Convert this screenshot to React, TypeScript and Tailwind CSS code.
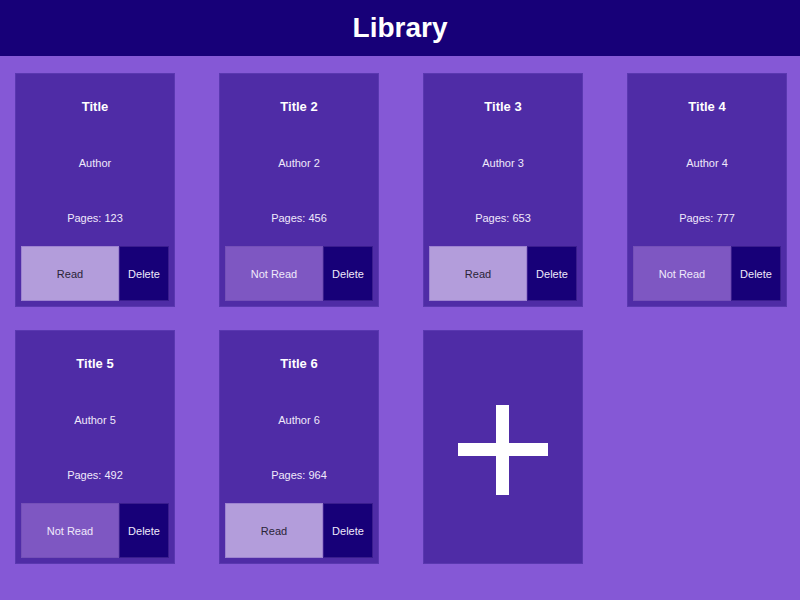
import React from "react";

type Book = { title: string; author: string; pages: number; read: boolean };

const books: Book[] = [
  { title: "Title", author: "Author", pages: 123, read: true },
  { title: "Title 2", author: "Author 2", pages: 456, read: false },
  { title: "Title 3", author: "Author 3", pages: 653, read: true },
  { title: "Title 4", author: "Author 4", pages: 777, read: false },
  { title: "Title 5", author: "Author 5", pages: 492, read: false },
  { title: "Title 6", author: "Author 6", pages: 964, read: true },
];

const BookCard = ({ book }: { book: Book }) => {
  return (
    <div className="h-[234px] bg-[#4f2ca6] border border-[#5a38b0] p-[5px] grid grid-rows-4 text-[#efe9fb] text-[11px]">
      <div className="flex items-center justify-center font-bold text-[13px] text-white">{book.title}</div>
      <div className="flex items-center justify-center pt-px">{book.author}</div>
      <div className="flex items-center justify-center pt-px">Pages: {book.pages}</div>
      <div className="flex">
        <button
          className={
            book.read
              ? "flex-1 pt-px bg-[#b39ddb] text-[#2a2438] border border-[#9d83d0]"
              : "flex-1 pt-px bg-[#7e57c2] text-[#efe9fb] border border-[#7450b8]"
          }
        >
          {book.read ? "Read" : "Not Read"}
        </button>
        <button className="w-[50px] pt-px bg-[#170078] text-[#efe9fb] border border-[#3a1d8e]">Delete</button>
      </div>
    </div>
  );
};

export default function App() {
  return (
    <div className="min-h-[600px] bg-[#8558d6] font-['Liberation_Sans',Arial,sans-serif]">
      <header className="h-[56px] bg-[#170078] flex items-center justify-center">
        <h1 className="text-white font-bold text-[28px]">Library</h1>
      </header>
      <main className="grid grid-cols-[repeat(4,160px)] gap-x-[44px] gap-y-[23px] pl-[15px] pt-[17px]">
        {books.map((b) => (
          <BookCard key={b.title} book={b} />
        ))}
        <div className="h-[234px] bg-[#4f2ca6] border border-[#5a38b0] flex items-center justify-center">
          <svg width="90" height="90" viewBox="0 0 90 90" className="mt-[5px]">
            <rect x="38" y="0" width="13" height="90" fill="white" />
            <rect x="0" y="38" width="90" height="13" fill="white" />
          </svg>
        </div>
      </main>
    </div>
  );
}
